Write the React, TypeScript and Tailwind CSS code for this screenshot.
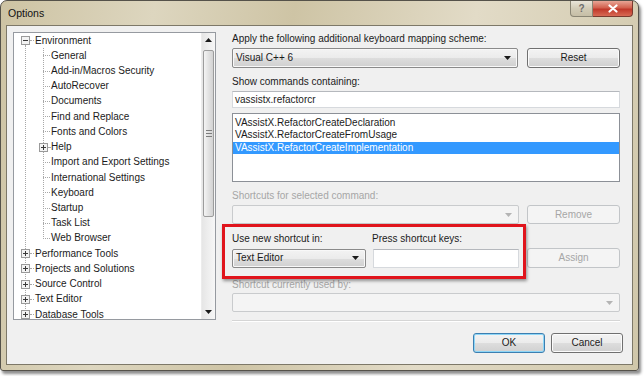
import React from "react";

const tree: { label: string; level: number; exp?: "plus" | "minus" }[] = [
  { label: "Environment", level: 0, exp: "minus" },
  { label: "General", level: 1 },
  { label: "Add-in/Macros Security", level: 1 },
  { label: "AutoRecover", level: 1 },
  { label: "Documents", level: 1 },
  { label: "Find and Replace", level: 1 },
  { label: "Fonts and Colors", level: 1 },
  { label: "Help", level: 1, exp: "plus" },
  { label: "Import and Export Settings", level: 1 },
  { label: "International Settings", level: 1 },
  { label: "Keyboard", level: 1 },
  { label: "Startup", level: 1 },
  { label: "Task List", level: 1 },
  { label: "Web Browser", level: 1 },
  { label: "Performance Tools", level: 0, exp: "plus" },
  { label: "Projects and Solutions", level: 0, exp: "plus" },
  { label: "Source Control", level: 0, exp: "plus" },
  { label: "Text Editor", level: 0, exp: "plus" },
  { label: "Database Tools", level: 0, exp: "plus" },
];

function Expander({ kind }: { kind: "plus" | "minus" }) {
  return (
    <svg width="9" height="9" className="shrink-0">
      <rect x="0.5" y="0.5" width="8" height="8" fill="#f3f3f3" stroke="#9a9a9a" />
      <line x1="2" y1="4.5" x2="7" y2="4.5" stroke="#3a3a3a" />
      {kind === "plus" && <line x1="4.5" y1="2" x2="4.5" y2="7" stroke="#3a3a3a" />}
    </svg>
  );
}

function Arrow({ disabled, dir = "down" }: { disabled?: boolean; dir?: "down" | "up" }) {
  return (
    <svg width="7" height="4" className="shrink-0">
      <polygon
        points={dir === "down" ? "0,0 7,0 3.5,4" : "0,4 7,4 3.5,0"}
        fill={disabled ? "#b4b4b4" : "#1a1a1a"}
      />
    </svg>
  );
}

const gloss =
  "bg-[linear-gradient(to_bottom,#f3f3f3_0%,#ebebeb_50%,#dddddd_51%,#d0d0d0_100%)]";

function Combo({
  value,
  disabled,
  className,
}: {
  value?: string;
  disabled?: boolean;
  className: string;
}) {
  return (
    <div
      className={`flex items-center justify-between rounded-[2px] border pl-[3px] pr-[6px] ${
        disabled
          ? "border-[#c9cbcd] bg-[#f4f4f4]"
          : `border-[#8a8a8a] ${gloss} shadow-[inset_0_0_0_1px_#f8f8f8]`
      } ${className}`}
    >
      <span>{value}</span>
      <Arrow disabled={disabled} />
    </div>
  );
}

function Btn({
  children,
  disabled,
  focus,
  className,
}: {
  children: React.ReactNode;
  disabled?: boolean;
  focus?: boolean;
  className: string;
}) {
  let look = `border-[#707070] ${gloss} shadow-[inset_0_0_0_1px_#fbfbfb]`;
  if (disabled) look = "border-[#c2c5c8] bg-[#f4f4f4] text-[#a6a6a6]";
  if (focus) look = `border-[#3c7fb1] ${gloss} shadow-[inset_0_0_0_1px_#8ed6f7]`;
  return (
    <div className={`flex items-center justify-center rounded-[3px] border ${look} ${className}`}>
      {children}
    </div>
  );
}

function TreeView() {
  return (
    <div className="flex w-[203px] h-[288px] border border-[#969aa0] bg-white">
      <div className="relative flex-1 overflow-hidden">
        <div className="absolute left-[11px] top-[12px] bottom-0 border-l border-dotted border-[#a8a8a8]" />
        <div className="absolute left-[29px] top-[15px] h-[191px] border-l border-dotted border-[#a8a8a8]" />
        {tree.map((item) =>
          item.level === 0 ? (
            <div key={item.label} className="relative flex items-center h-[15.23px] pl-[7px]">
              <Expander kind={item.exp ?? "plus"} />
              <span className="w-[4px] border-t border-dotted border-[#a8a8a8]" />
              <span className="ml-[1px] whitespace-nowrap">{item.label}</span>
            </div>
          ) : (
            <div key={item.label} className="relative flex items-center h-[15.23px] pl-[25px]">
              {item.exp ? (
                <>
                  <Expander kind={item.exp} />
                  <span className="w-[2px] border-t border-dotted border-[#a8a8a8]" />
                </>
              ) : (
                <span className="ml-[4px] w-[7px] border-t border-dotted border-[#a8a8a8]" />
              )}
              <span className="ml-[1px] whitespace-nowrap">{item.label}</span>
            </div>
          )
        )}
      </div>
      <div className="flex w-[14px] flex-col bg-[linear-gradient(to_right,#e6e6e6,#f7f7f7)] border-l border-[#ececec]">
        <div className="flex h-[14px] items-center justify-center">
          <Arrow dir="up" />
        </div>
        <div className="flex-1">
          <div className="mx-[1px] mt-[3px] flex h-[167px] flex-col items-center justify-center gap-[2px] rounded-[2px] border border-[#9c9c9c] bg-[linear-gradient(to_right,#f4f4f4,#e2e2e2_50%,#d3d3d3)]">
            <span className="w-[6px] border-t border-[#7d7d7d]" />
            <span className="w-[6px] border-t border-[#7d7d7d]" />
            <span className="w-[6px] border-t border-[#7d7d7d]" />
          </div>
        </div>
        <div className="flex h-[14px] items-center justify-center">
          <Arrow />
        </div>
      </div>
    </div>
  );
}

export default function App() {
  return (
    <div className="w-[644px] h-[376px] bg-white font-['Liberation_Sans',Arial,sans-serif] text-[10px] leading-[12px] text-[#1b1b1b]">
      <div className="flex w-[639px] h-[371px] flex-col rounded-t-[7px] rounded-b-[3px] border border-[#55524a] bg-[linear-gradient(100deg,#cdc3a3_0%,#ddd6bf_22%,#cec4a5_42%,#e2dbc7_68%,#d0c7aa_100%)] shadow-[2px_3px_3px_rgba(0,0,0,0.45)]">
        <div className="flex h-[24px] items-start justify-between">
          <span className="pl-[7px] pt-[6px] text-[10.5px] text-[#111]">Options</span>
          <div className="mr-[5px] flex">
            <div className="flex h-[16px] w-[23px] items-center justify-center rounded-bl-[4px] border border-t-0 border-[#8a8574] bg-[linear-gradient(to_bottom,#e9e5d9,#d2cbb6_50%,#c6bea6)] text-[10px] font-bold text-[#6d6d6d]">
              ?
            </div>
            <div className="flex h-[16px] w-[40px] items-center justify-center rounded-br-[4px] border border-l-0 border-t-0 border-[#7a3a2e] bg-[linear-gradient(to_bottom,#e8a595,#d2614e_45%,#c0382a_55%,#d86a54)]">
              <svg width="10" height="9">
                <path d="M1.5 1.5 L8.5 7.5 M8.5 1.5 L1.5 7.5" stroke="#fff" strokeWidth="2.2" strokeLinecap="round" />
              </svg>
            </div>
          </div>
        </div>

        <div className="mx-[5px] mb-[5px] flex flex-1 border border-[#7d7868] bg-[#f0f0f0]">
          <div className="pl-[6px] pt-[6px]">
            <TreeView />
          </div>

          <div className="relative ml-[16px] flex w-[388px] flex-col pt-[7px]">
            <div>Apply the following additional keyboard mapping scheme:</div>
            <div className="mt-[3px] flex items-center justify-between">
              <Combo value="Visual C++ 6" className="h-[20px] w-[286px]" />
              <Btn className="h-[20px] w-[93px]">Reset</Btn>
            </div>

            <div className="mt-[8px]">Show commands containing:</div>
            <div className="mt-[3px] flex h-[17px] items-center border border-[#d6d9dd] border-t-[#b5b8bd] bg-white pl-[2px]">
              vassistx.refactorcr
            </div>

            <div className="mt-[5px] h-[69px] border border-[#8c9097] bg-white pt-[3px] leading-[12.3px]">
              <div className="pl-[2px]">VAssistX.RefactorCreateDeclaration</div>
              <div className="pl-[2px]">VAssistX.RefactorCreateFromUsage</div>
              <div className="bg-[#3399ff] pl-[2px] text-white">VAssistX.RefactorCreateImplementation</div>
            </div>

            <div className="mt-[8px] text-[#a6a6a6]">Shortcuts for selected command:</div>
            <div className="mt-[3px] flex items-center justify-between">
              <Combo disabled className="h-[19px] w-[287px]" />
              <Btn disabled className="h-[19px] w-[93px]">Remove</Btn>
            </div>

            <div className="mt-[9px] flex">
              <span className="w-[140px]">Use new shortcut in:</span>
              <span>Press shortcut keys:</span>
            </div>
            <div className="mt-[3px] flex items-center">
              <Combo value="Text Editor" className="h-[19px] w-[134px]" />
              <div className="ml-[7px] h-[19px] w-[146px] border border-[#d6d9dd] border-t-[#b5b8bd] bg-white" />
              <Btn disabled className="ml-auto h-[20px] w-[93px]">Assign</Btn>
            </div>

            <div className="mt-[11px] text-[#a6a6a6]">Shortcut currently used by:</div>
            <Combo disabled className="mt-[2px] h-[19px] w-full" />

            <div className="mt-[8px] border-t border-[#d5d5d5] shadow-[0_1px_0_#ffffff]" />

            <div className="-mr-[3px] mt-[12px] flex justify-end gap-[6px]">
              <Btn focus className="h-[20px] w-[72px]">OK</Btn>
              <Btn className="h-[20px] w-[72px]">Cancel</Btn>
            </div>

            <div className="absolute -left-[10px] top-[198px] h-[55px] w-[304px] border-[3px] border-[#e0141c] shadow-[1px_2px_3px_rgba(0,0,0,0.4)]" />
          </div>
        </div>
      </div>
    </div>
  );
}
